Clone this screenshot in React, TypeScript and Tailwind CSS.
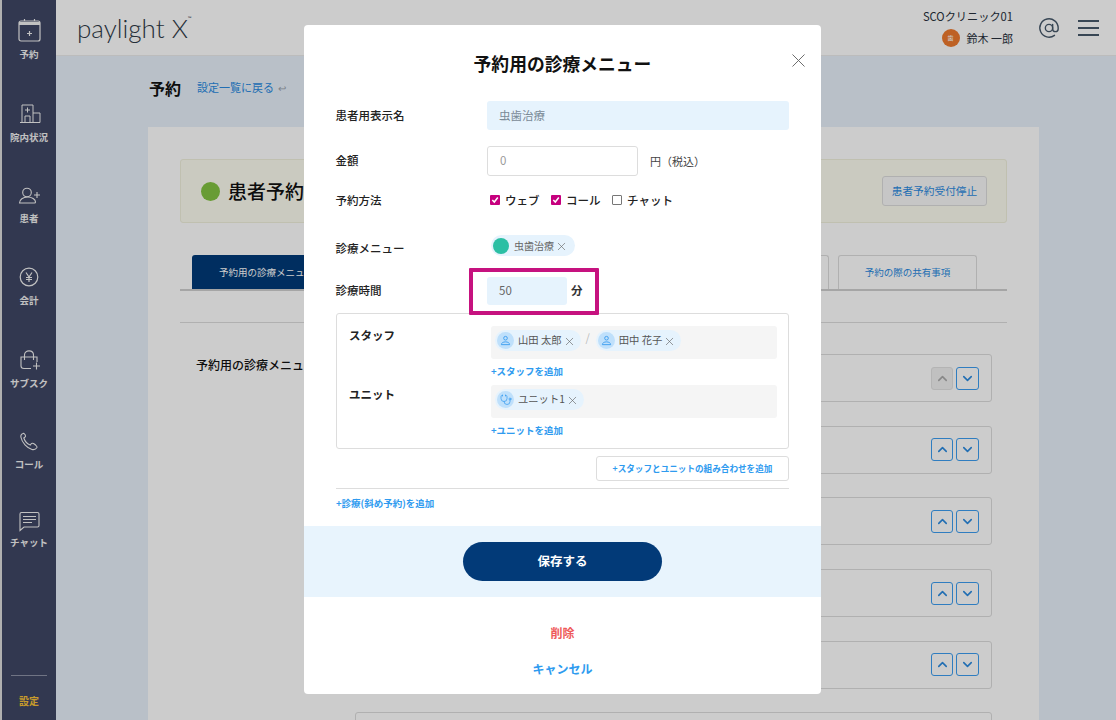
import React from 'react';
import { ChevronUp, ChevronDown, X, AtSign, Stethoscope } from 'lucide-react';

const jp = { fontFamily: '"Noto Sans CJK JP", "Noto Sans", sans-serif' };

const ReserveIcon = () => (
  <svg width="24" height="24" viewBox="0 0 24 24" fill="none" stroke="currentColor" strokeWidth="1.2">
    <rect x="2" y="3" width="21" height="20" rx="2" />
    <path d="M2 5.500h21" strokeWidth="3" />
    <path d="M7.500 1v2M17.500 1v2M12.500 13v5M10 15.500h5" />
  </svg>
);
const HospitalIcon = () => (
  <svg width="24" height="24" viewBox="0 0 24 24" fill="none" stroke="currentColor" strokeWidth="1">
    <path d="M5 21.500V4h11v17.500M16 12h7v9.500M3 21.500h20M8 21.500V15h5v6.500" />
    <path d="M10.500 6.500v5M8 9h5" />
  </svg>
);
const PatientIcon = () => (
  <svg width="24" height="24" viewBox="0 0 24 24" fill="none" stroke="currentColor" strokeWidth="1.1">
    <circle cx="10" cy="10.500" r="4.300" />
    <path d="M2.500 21c0-3.500 3.500-6 8-6s8 2.500 8 5c0 .7-.5 1-1 1z" />
    <path d="M20 10v6M17 13h6" />
  </svg>
);
const YenIcon = () => (
  <svg width="24" height="24" viewBox="0 0 24 24" fill="none" stroke="currentColor" strokeWidth="1.2">
    <circle cx="12" cy="13" r="8.800" />
    <path d="M9 8.500l3 4.500 3-4.500M12 13v5M9 13.500h6M9 15.500h6" />
  </svg>
);
const BagIcon = () => (
  <svg width="24" height="24" viewBox="0 0 24 24" fill="none" stroke="currentColor" strokeWidth="1.1">
    <path d="M14 20.500H7c-1.500 0-3-1-3-2.500V9h16v5" />
    <path d="M7.500 12V7c0-5.500 9-5.500 9 0v5" />
    <path d="M19.500 14.500v7M16 18h7" />
  </svg>
);
const PhoneIcon = () => (
  <svg width="24" height="24" viewBox="0 0 24 24" fill="none" stroke="currentColor" strokeWidth="1.1">
    <path d="M6 3.500c-1.500.5-2.500 2-2 4 1 5 6 10.500 11 12 2 .5 4-.5 5-2 .5-1-1-2-2-3l-1.500-1c-1-.5-2-.2-2.500.5l-.7 1c-3-1-5.500-4-6.500-7l1-.7c.7-.5 1-1.300.5-2.300L7.500 4c-.3-.5-1-.8-1.500-.5z" />
  </svg>
);
const ChatIcon = () => (
  <svg width="24" height="24" viewBox="0 0 24 24" fill="none" stroke="currentColor" strokeWidth="1.1">
    <path d="M4.500 4.500h16c1 0 1.500.5 1.500 1.500v11.500c0 1-.5 1.500-1.500 1.500H7L3 22.500V6c0-1 .5-1.500 1.500-1.500z" />
    <path d="M6 8.500h13M6 11.500h13M6 14.500h9" />
  </svg>
);

const navItems = [
  { label: '予約', icon: <ReserveIcon />, cls: 'h-[83px] pt-[18px]', labelCls: 'mt-[5px]' },
  { label: '院内状況', icon: <HospitalIcon />, cls: 'h-[82px] pt-[18px]', labelCls: 'mt-[5px]' },
  { label: '患者', icon: <PatientIcon />, cls: 'h-[81px] pt-[17px]', labelCls: 'mt-[5px]' },
  { label: '会計', icon: <YenIcon />, cls: 'h-[84px] pt-[18px]', labelCls: 'mt-[5px]' },
  { label: 'サブスク', icon: <BagIcon />, cls: 'h-[82px] pt-[18px]', labelCls: 'mt-[4px]' },
  { label: 'コール', icon: <PhoneIcon />, cls: 'h-[78px] pt-[18px]', labelCls: 'mt-[3px]' },
  { label: 'チャット', icon: <ChatIcon />, cls: 'h-[80px] pt-[18px]', labelCls: 'mt-[3px]' },
];

const Sidebar = () => (
  <aside className="ml-[2px] flex h-full w-[54px] shrink-0 flex-col bg-[#3f4664] text-[#f2f2f2]">
    <div className="flex flex-col">
      {navItems.map((item) => (
        <div key={item.label} className={`flex flex-col items-center ${item.cls}`}>
          {item.icon}
          <span className={`text-[9.500px] font-bold leading-[14px] whitespace-nowrap ${item.labelCls}`}>{item.label}</span>
        </div>
      ))}
    </div>
    <div className="mt-auto mx-[9px] border-t border-[#8d92a6] pt-[18px] pb-[12px] text-center text-[10px] font-bold leading-[14px] text-[#f9c237]">
      設定
    </div>
  </aside>
);

const Header = () => (
  <header className="flex h-[56px] shrink-0 items-center justify-between border-b border-[#ececec] bg-white pl-[21px] pr-[17px]">
    <div className="flex items-start text-[#2f3a47]" style={{ fontFamily: 'Lato, sans-serif' }}>
      <span className="text-[26px] font-light leading-[32px]">paylight X</span>
      <span className="mt-[3px] text-[5px] leading-[6px]">™</span>
    </div>
    <div className="flex items-center">
      <div className="mr-[25px] flex flex-col items-end text-[#27303c]">
        <span className="text-[11.200px] leading-[15px]">SCOクリニック01</span>
        <div className="mt-[5px] flex items-center">
          <span className="mr-[7px] flex h-[18px] w-[18px] items-center justify-center rounded-full bg-[#ee7a2e] text-[6px] text-white">歯</span>
          <span className="text-[11px] leading-[16px]">鈴木 一郎</span>
        </div>
      </div>
      <AtSign className="mr-[18px] h-[22px] w-[22px] text-[#46586a]" strokeWidth={1.5} />
      <div className="flex w-[21px] flex-col gap-[5px]">
        <span className="h-[2px] bg-[#46586a]" />
        <span className="h-[2px] bg-[#46586a]" />
        <span className="h-[2px] bg-[#46586a]" />
      </div>
    </div>
  </header>
);

const MoveButtons = ({ upDisabled }: { upDisabled?: boolean }) => (
  <div className="flex gap-[3px]">
    <span
      className={`flex h-[23px] w-[22px] items-center justify-center rounded-[3px] border ${
        upDisabled ? 'border-[#e2e2e2] bg-[#f0f0f0] text-[#aaaaaa]' : 'border-[#3b9df0] text-[#2a8ae0]'
      }`}
    >
      <ChevronUp className="h-[15px] w-[15px]" strokeWidth={2.5} />
    </span>
    <span className="flex h-[23px] w-[23px] items-center justify-center rounded-[3px] border border-[#3b9df0] text-[#2a8ae0]">
      <ChevronDown className="h-[15px] w-[15px]" strokeWidth={2.5} />
    </span>
  </div>
);

const MenuRow = ({ upDisabled }: { upDisabled?: boolean }) => (
  <div className="flex h-[48px] w-[637px] shrink-0 items-center justify-end rounded-[3px] border border-[#dcdcdc] pr-[12px]">
    <MoveButtons upDisabled={upDisabled} />
  </div>
);

const Background = () => (
  <main className="min-h-0 flex-1 overflow-hidden bg-[#e8f1fb] pl-[92px] pr-[77px]">
    <div className="flex h-[71px] items-center pb-[8px] pl-[1px]">
      <h1 className="text-[16px] font-bold text-[#111111]">予約</h1>
      <span className="ml-[16px] text-[11px] text-[#2a8ae0]">設定一覧に戻る</span>
      <span className="ml-[4px] text-[10px] text-[#9aa3ad]">↩</span>
    </div>
    <div className="h-[600px] bg-white px-[32px] pt-[32px]">
      <div className="flex h-[64px] items-center justify-between rounded-[3px] border border-[#f0f0dc] bg-[#fdfdf1] pl-[20px] pr-[19px]">
        <div className="flex items-center">
          <span className="h-[19px] w-[19px] rounded-full bg-[#82c341]" />
          <span className="ml-[8px] whitespace-nowrap text-[19px] font-medium text-[#111111]">患者予約</span>
        </div>
        <span className="flex h-[30px] w-[105px] items-center justify-center rounded-[3px] border border-[#dddddd] bg-[#f8f8f8] text-[10.700px] text-[#2a8ae0]">
          患者予約受付停止
        </span>
      </div>
      <div className="mt-[32px] flex h-[36px] justify-between border-b-2 border-[#cfcfcf] pl-[12px] pr-[30px]">
        <div className="flex h-[34px] w-[149px] items-center justify-center whitespace-nowrap rounded-t-[3px] bg-[#013a78] text-[9.500px] text-white">
          予約用の診療メニュー
        </div>
        <div className="flex gap-[9px]">
          <div className="h-[34px] w-[160px] rounded-t-[3px] border border-b-0 border-[#dddddd]" />
          <div className="flex h-[34px] w-[139px] items-center justify-center rounded-t-[3px] border border-b-0 border-[#dddddd] text-[9.500px] text-[#2a8ae0]">
            予約の際の共有事項
          </div>
        </div>
      </div>
      <div className="mt-[31px] border-t border-[#dcdcdc] pt-[31px]">
        <div className="flex">
          <span className="w-[175px] shrink-0 whitespace-nowrap pl-[16px] pt-[2px] text-[12px] font-medium text-[#111111]">予約用の診療メニュー</span>
          <div className="flex flex-col gap-[23.700px]">
            <MenuRow upDisabled />
            <MenuRow />
            <MenuRow />
            <MenuRow />
            <MenuRow />
            <MenuRow />
          </div>
        </div>
      </div>
    </div>
  </main>
);

const Label = ({ children }: { children: React.ReactNode }) => (
  <span className="-ml-[0.500px] w-[151.500px] shrink-0 pb-[2px] text-[11.500px] font-medium leading-[16px] text-[#222222]">{children}</span>
);

const Check = ({ on, label }: { on?: boolean; label: string }) => (
  <label className="flex items-center text-[11.500px] font-medium leading-[16px] text-[#222222]">
    <span
      className={`mr-[5px] flex h-[10px] w-[10px] items-center justify-center rounded-[1px] ${
        on ? 'bg-[#c6007e]' : 'border border-[#777777] bg-white'
      }`}
    >
      {on && (
        <svg width="8" height="8" viewBox="0 0 8 8" fill="none" stroke="white" strokeWidth="1.500">
          <path d="M1.300 4l2 2 3.500-4.500" />
        </svg>
      )}
    </span>
    {label}
  </label>
);

const PersonChip = ({ name, icon }: { name: string; icon?: React.ReactNode }) => (
  <span className="flex h-[21px] items-center rounded-full bg-[#e6f3fd] pl-[2px] pr-[5px]">
    <span className="flex h-[17px] w-[17px] items-center justify-center rounded-full bg-[#bfe0fb] text-[#3b9df0]">
      {icon ?? (
        <svg width="11" height="11" viewBox="0 0 12 12" fill="none" stroke="currentColor" strokeWidth="1">
          <circle cx="6" cy="3.500" r="2" />
          <path d="M1.500 10.500c0-2 2-3 4.500-3s4.500 1 4.500 3z" />
        </svg>
      )}
    </span>
    <span className="ml-[4px] pb-[2px] text-[10.300px] leading-[14px] whitespace-nowrap text-[#555555]">{name}</span>
    <X className="ml-[1px] mt-[1px] h-[13px] w-[13px] text-[#666666]" strokeWidth={1.2} />
  </span>
);

const AddLink = ({ children, className }: { children: React.ReactNode; className?: string }) => (
  <span className={`text-[9.500px] font-bold leading-[14px] whitespace-nowrap text-[#2f9bef] ${className ?? ''}`}>{children}</span>
);

const Modal = () => (
  <div className="absolute left-[304px] top-[25px] flex h-[669px] w-[517px] flex-col overflow-hidden rounded-[4px] bg-white">
    <div className="relative flex h-[76px] shrink-0 items-start justify-center pt-[25px]">
      <h2 className="text-[17.800px] font-bold leading-[26px] text-[#111111]">予約用の診療メニュー</h2>
      <X className="absolute right-[11px] top-[24px] h-[23px] w-[23px] text-[#666666]" strokeWidth={1} />
    </div>
    <div className="flex flex-1 flex-col px-[32px]">
      <div className="flex h-[29px] items-center">
        <Label>患者用表示名</Label>
        <div className="flex h-[29px] w-[302px] items-center rounded-[3px] bg-[#e6f3fd] pl-[12px] text-[11.500px] text-[#7a8a96]">虫歯治療</div>
      </div>
      <div className="mt-[16px] flex h-[30px] items-center">
        <Label>金額</Label>
        <div className="flex h-[30px] w-[151px] items-center rounded-[3px] border border-[#dddddd] pl-[12px] text-[11.500px] text-[#999999]">0</div>
        <span className="ml-[12px] text-[11px] text-[#444444]">円（税込）</span>
      </div>
      <div className="mt-[16px] flex h-[16px] items-center">
        <span className="mt-[2px] flex w-[151px] shrink-0"><Label>予約方法</Label></span>
        <div className="ml-[3px] flex gap-[11.500px]">
          <Check on label="ウェブ" />
          <Check on label="コール" />
          <Check label="チャット" />
        </div>
      </div>
      <div className="mt-[27px] flex h-[21px] items-center">
        <span className="mt-[6px] flex w-[151px] shrink-0"><Label>診療メニュー</Label></span>
        <span className="ml-[4px] flex h-[21px] items-center rounded-full bg-[#e6f3fd] pl-[2px] pr-[7px]">
          <span className="h-[16px] w-[16px] rounded-full bg-[#2bbfa4]" />
          <span className="ml-[5px] text-[10px] text-[#666666]">虫歯治療</span>
          <X className="ml-[1px] mt-[1px] h-[13px] w-[13px] text-[#666666]" strokeWidth={1.2} />
        </span>
      </div>
      <div className="relative mt-[21px] flex h-[28px] items-center">
        <Label>診療時間</Label>
        <div className="flex h-[28px] w-[80px] items-center rounded-[3px] bg-[#e6f3fd] pl-[12px] text-[11.500px] text-[#666666]">50</div>
        <span className="ml-[4px] text-[11.500px] font-bold text-[#333333]">分</span>
        <div className="absolute left-[133px] top-[-9px] h-[47px] w-[130px] rounded-[1px] border-[4px] border-[#c6127f]" />
      </div>
      <div className="mt-[8px] h-[136px] rounded-[3px] border border-[#dddddd] pl-[12px] pr-[12px] pt-[12px]">
        <div className="flex">
          <span className="w-[142px] shrink-0 text-[11.500px] font-bold leading-[18px] text-[#222222]">スタッフ</span>
          <div>
            <div className="flex h-[33px] w-[286px] items-start rounded-[3px] bg-[#f5f5f5] pl-[4px] pt-[4px]">
              <PersonChip name="山田 太郎" />
              <span className="ml-[5px] mr-[6px] text-[11px] leading-[14px] text-[#bbbbbb]">/</span>
              <PersonChip name="田中 花子" />
            </div>
            <AddLink className="mt-[5px] block">+スタッフを追加</AddLink>
          </div>
        </div>
        <div className="mt-[7px] flex">
          <span className="w-[142px] shrink-0 text-[11.500px] font-bold leading-[18px] text-[#222222]">ユニット</span>
          <div>
            <div className="flex h-[33px] w-[286px] items-start rounded-[3px] bg-[#f5f5f5] pl-[4px] pt-[4px]">
              <PersonChip name="ユニット1" icon={<Stethoscope className="h-[12px] w-[12px]" strokeWidth={1.5} />} />
            </div>
            <AddLink className="mt-[5px] block">+ユニットを追加</AddLink>
          </div>
        </div>
      </div>
      <div className="mt-[7px] flex justify-end">
        <span className="flex h-[25px] w-[193px] items-center justify-center rounded-[3px] border border-[#dddddd] text-[8.600px] font-bold text-[#2f9bef]">
          +スタッフとユニットの組み合わせを追加
        </span>
      </div>
      <div className="mt-[7px] border-t border-[#dddddd] pt-[7px]">
        <AddLink className="block">+診療(斜め予約)を追加</AddLink>
      </div>
    </div>
    <div className="flex h-[71px] shrink-0 items-center justify-center bg-[#e8f4fd]">
      <button className="h-[39px] w-[199px] rounded-full bg-[#023a78] text-[12.500px] font-bold text-white">保存する</button>
    </div>
    <div className="flex h-[97px] shrink-0 flex-col items-center pt-[27px]">
      <span className="text-[12px] font-bold leading-[18px] text-[#ee5a5a]">削除</span>
      <span className="mt-[18px] text-[12px] font-bold leading-[18px] text-[#2f9bef]">キャンセル</span>
    </div>
  </div>
);

export default function App() {
  return (
    <div className="relative flex h-screen w-full overflow-hidden bg-[#dddddd]" style={jp}>
      <Sidebar />
      <div className="flex min-w-0 flex-1 flex-col">
        <Header />
        <Background />
      </div>
      <div className="absolute inset-0 bg-black/20" />
      <Modal />
    </div>
  );
}
